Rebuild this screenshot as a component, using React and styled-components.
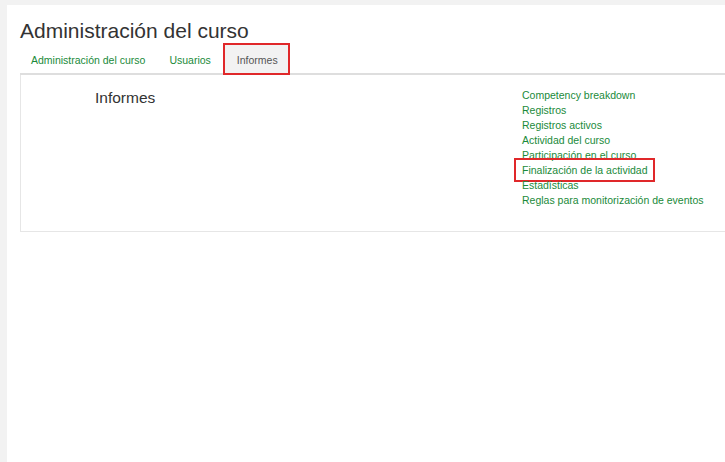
import React from "react";
import styled, { createGlobalStyle } from "styled-components";

const Global = createGlobalStyle`
  html, body { margin: 0; padding: 0; background: #f2f2f2; }
  body { font-family: "Liberation Sans", Arial, sans-serif; }
`;

const Page = styled.div`
  margin: 5px 0 0 7px;
  min-height: 457px;
  background: #ffffff;
  padding: 13px 0 0 13px;
  box-sizing: border-box;
  overflow: hidden;
`;

const Title = styled.h1`
  margin: 0;
  font-size: 21px;
  line-height: 26px;
  font-weight: 400;
  color: #333333;
`;

const Tabs = styled.div`
  display: flex;
  gap: 2px;
  margin-top: 1px;
  width: 760px;
  border-bottom: 2px solid #dedede;
  height: 28px;
  align-items: stretch;
`;

const Tab = styled.div`
  font-size: 10.5px;
  display: flex;
  align-items: center;
  padding-top: 1px;
  padding-left: ${(p) => (p.$active ? "12px" : "11px")};
  padding-right: ${(p) => (p.$active ? "10px" : "11px")};
  margin-left: ${(p) => (p.$active ? "1px" : "0")};
  color: ${(p) => (p.$active ? "#555555" : "#1a8a3a")};
  background: ${(p) => (p.$active ? "#f2f2f2" : "transparent")};
  box-shadow: ${(p) => (p.$active ? "0 0 0 2px #e0282a" : "none")};
`;

const Box = styled.div`
  width: 760px;
  height: 157px;
  border: 1px solid #e6e6e6;
  border-top: none;
  box-sizing: border-box;
  display: grid;
  grid-template-columns: 427px 1fr;
  padding: 13px 0 0 74px;
`;

const Heading = styled.h2`
  margin: 0;
  font-size: 15.5px;
  line-height: 20px;
  font-weight: 400;
  color: #333333;
`;

const LinkList = styled.ul`
  list-style: none;
  margin: 0;
  padding: 0;
`;

const LinkItem = styled.li`
  font-size: 10.5px;
  line-height: 15px;
  color: #1a8a3a;
  width: fit-content;
  position: relative;
`;

const Highlight = styled.span`
  position: absolute;
  left: -8px;
  top: -5px;
  right: -7px;
  bottom: -4px;
  border: 2px solid #e0282a;
  pointer-events: none;
`;

const links = [
  "Competency breakdown",
  "Registros",
  "Registros activos",
  "Actividad del curso",
  "Participación en el curso",
  "Finalización de la actividad",
  "Estadísticas",
  "Reglas para monitorización de eventos",
];

export default function App() {
  return (
    <>
      <Global />
      <Page>
        <Title>Administración del curso</Title>
        <Tabs>
          <Tab>Administración del curso</Tab>
          <Tab>Usuarios</Tab>
          <Tab $active>Informes</Tab>
        </Tabs>
        <Box>
          <Heading>Informes</Heading>
          <LinkList>
            {links.map((l) => (
              <LinkItem key={l}>
                {l}
                {l === "Finalización de la actividad" && <Highlight />}
              </LinkItem>
            ))}
          </LinkList>
        </Box>
      </Page>
    </>
  );
}
